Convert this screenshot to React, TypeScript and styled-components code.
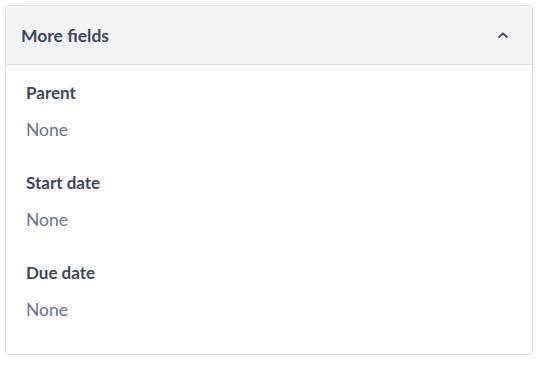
import React from 'react'
import styled, { createGlobalStyle } from 'styled-components'

const fields = [
  { label: 'Parent', value: 'None' },
  { label: 'Start date', value: 'None' },
  { label: 'Due date', value: 'None' },
]

export default function App() {
  return (
    <>
      <GlobalStyle />
      <Card>
        <Header>
          <Title>More fields</Title>
          <Chevron viewBox="0 0 10 6" aria-hidden>
            <path d="M1.2 5 L5 1.4 L8.8 5" />
          </Chevron>
        </Header>
        <Body>
          {fields.map((f) => (
            <Field key={f.label}>
              <Label>{f.label}</Label>
              <Value>{f.value}</Value>
            </Field>
          ))}
        </Body>
      </Card>
    </>
  )
}

const GlobalStyle = createGlobalStyle`
  body {
    margin: 0;
    padding: 5px;
    background: #fff;
    font-family: Lato, 'Noto Sans', sans-serif;
  }
`

const Card = styled.section`
  width: 528px;
  box-sizing: border-box;
  border: 1px solid #dcdfe4;
  border-radius: 4px;
  overflow: hidden;
  background: #fff;
`

const Header = styled.div`
  display: flex;
  align-items: center;
  justify-content: space-between;
  height: 58px;
  padding: 0 24px 0 15px;
  background: #f1f2f4;
  border-bottom: 1px solid #dcdfe4;
`

const Title = styled.span`
  font-size: 17.5px;
  font-weight: 700;
  color: #414a5c;
`

const Chevron = styled.svg`
  width: 10px;
  height: 6px;
  fill: none;
  stroke: #4a5263;
  stroke-width: 2;
  stroke-linecap: round;
  stroke-linejoin: round;
`

const Body = styled.div`
  display: flex;
  flex-direction: column;
  gap: 29px;
  padding: 16px 20px 32px;
`

const Field = styled.div`
  display: flex;
  flex-direction: column;
  gap: 13px;
`

const Label = styled.div`
  font-size: 17px;
  line-height: 24px;
  font-weight: 700;
  color: #3f4758;
`

const Value = styled.div`
  font-size: 17.5px;
  line-height: 24px;
  color: #6b7385;
`
